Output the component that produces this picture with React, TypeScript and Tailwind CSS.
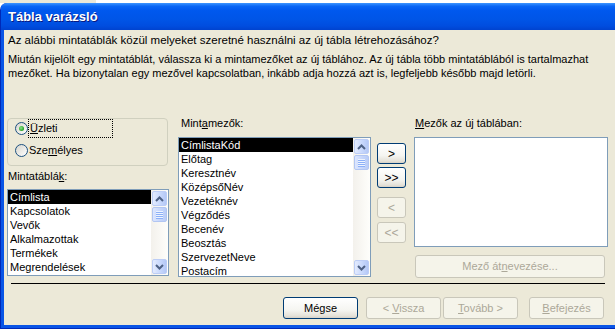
import clsx from 'clsx';
import type { ReactNode } from 'react';

const templates = ['Címlista', 'Kapcsolatok', 'Vevők', 'Alkalmazottak', 'Termékek', 'Megrendelések'];
const fields = [
  'CímlistaKód',
  'Előtag',
  'Keresztnév',
  'KözépsőNév',
  'Vezetéknév',
  'Végződés',
  'Becenév',
  'Beosztás',
  'SzervezetNeve',
  'Postacím',
];

function ScrollArrow({ dir }: { dir: 'up' | 'down' }) {
  return (
    <div className="h-[15px] rounded-[2px] border border-[#bccdf6] bg-[linear-gradient(90deg,#e3ebfe,#c8d8fc_55%,#b4c8f6)] flex items-center justify-center">
      <svg width="9" height="6" viewBox="0 0 9 6">
        <path
          d={dir === 'up' ? 'M1 5 L4.5 1.5 L8 5' : 'M1 1 L4.5 4.5 L8 1'}
          fill="none"
          stroke="#4d6185"
          strokeWidth="2"
        />
      </svg>
    </div>
  );
}

function ScrollBar() {
  return (
    <div className="w-[17px] flex flex-col p-[1px] bg-[linear-gradient(90deg,#f3f1ec,#fefefb)]">
      <ScrollArrow dir="up" />
      {/* thumb */}
      <div className="mt-[1px] h-[15px] rounded-[2px] border border-[#b2c6f2] bg-[linear-gradient(90deg,#dce6fe,#c6d6fb_55%,#b9ccf7)] flex flex-col items-center justify-center">
        {[0, 1, 2, 3].map((i) => (
          <div key={i} className="w-[7px] h-[2px] border-t border-[#eef4fe] border-b border-b-[#8cb0f8]" />
        ))}
      </div>
      <div className="flex-1" />
      <ScrollArrow dir="down" />
    </div>
  );
}

function ListBox({ items, className }: { items: string[]; className?: string }) {
  return (
    <div className={clsx('flex border border-[#7f9db9] bg-white overflow-hidden', className)}>
      <div className="flex-1 overflow-hidden">
        {items.map((item, i) => (
          <div
            key={item}
            className={clsx('h-[14px] leading-[14px] pl-[2px] whitespace-nowrap', i === 0 && 'bg-black text-white')}
          >
            {item}
          </div>
        ))}
      </div>
      <ScrollBar />
    </div>
  );
}

function XpButton({
  children,
  disabled,
  className,
}: {
  children: ReactNode;
  disabled?: boolean;
  className?: string;
}) {
  return (
    <div
      className={clsx(
        'rounded-[3px] border flex items-center justify-center',
        disabled
          ? 'border-[#c9c7ba] text-[#aca899] bg-[#f5f4ea]'
          : 'border-[#003c74] bg-[linear-gradient(180deg,#ffffff,#f5f5f1_60%,#e4e1d8_90%,#d6d0c5)]',
        className,
      )}
    >
      {children}
    </div>
  );
}

function Radio({ checked }: { checked?: boolean }) {
  return (
    <span className="w-[13px] h-[13px] rounded-full border border-[#1c5180] bg-[linear-gradient(135deg,#d6d5cd,#ffffff)] flex items-center justify-center shrink-0">
      {checked && <span className="w-[5px] h-[5px] rounded-full bg-[radial-gradient(circle_at_40%_40%,#8ce58c,#21a121_70%,#178317)]" />}
    </span>
  );
}

export default function App() {
  return (
    <div className="w-[615px] h-[329px] overflow-hidden bg-white flex flex-col font-['Liberation_Sans',Arial,sans-serif] text-[11px] text-black">
      {/* desktop strip above the window */}
      <div className="h-[3px] flex shrink-0">
        <div className="w-[96px] bg-[#ece9d8]" />
      </div>

      <div className="flex-1 flex flex-col rounded-tl-[7px] overflow-hidden bg-[#0029b8] pl-[1px] pb-[1px]">
        {/* Title bar */}
        <div className="h-[27px] shrink-0 flex items-center pl-[7px] bg-[linear-gradient(180deg,#3d95ff_0%,#0a66f5_12%,#0058ee_28%,#0055e7_60%,#004ddf_85%,#0043cf_100%)]">
          <span className="font-bold text-[13px] text-white [text-shadow:1px_1px_0_#0a1a80]">Tábla varázsló</span>
        </div>

        {/* Window body */}
        <div className="flex-1 flex flex-col border-l-[3px] border-b-[3px] border-[#0955e6] bg-[#ece9d8]">
          {/* Intro */}
          <div className="pl-[4px] pt-[3px] leading-[14px] whitespace-nowrap">
            <p className="text-[11.5px]">Az alábbi mintatáblák közül melyeket szeretné használni az új tábla létrehozásához?</p>
            <p className="mt-[5px]">
              Miután kijelölt egy mintatáblát, válassza ki a mintamezőket az új táblához. Az új tábla több mintatáblából is tartalmazhat
              <br />
              mezőket. Ha bizonytalan egy mezővel kapcsolatban, inkább adja hozzá azt is, legfeljebb később majd letörli.
            </p>
          </div>

          {/* Main area */}
          <div className="flex pl-[3px] mt-[36px]">
            {/* Templates column */}
            <div className="w-[162px] flex flex-col">
              <div className="mt-[2px] w-[161px] h-[48px] rounded-[4px] border border-[#d0d0bf] flex flex-col">
                <div className="flex items-center h-[19px]">
                  <span className="ml-[7px]">
                    <Radio checked />
                  </span>
                  <span className="h-[19px] w-[85px] border border-dotted border-black pl-[1px] leading-[17px]">
                    <u>Ü</u>zleti
                  </span>
                </div>
                <div className="flex items-center h-[19px] mt-[3px]">
                  <span className="ml-[7px]">
                    <Radio />
                  </span>
                  <span className="pl-[1px]">
                    Sze<u>m</u>élyes
                  </span>
                </div>
              </div>
              <div className="mt-[3px] pl-[1px] leading-[14px]">
                Mintatáblá<u>k</u>:
              </div>
              <ListBox items={templates} className="mt-[6px] h-[87px]" />
            </div>

            {/* Sample fields column */}
            <div className="ml-[9px] w-[193px] flex flex-col">
              <div className="pl-[3px] leading-[14px]">
                Mint<u>a</u>mezők:
              </div>
              <ListBox items={fields} className="mt-[7px] h-[140px]" />
            </div>

            {/* Move buttons */}
            <div className="ml-[6px] w-[29px] flex flex-col pt-[27px] text-[12px]">
              <XpButton className="h-[21px]">&gt;</XpButton>
              <XpButton className="h-[21px] mt-[3px]">&gt;&gt;</XpButton>
              <XpButton disabled className="h-[21px] mt-[9px]">
                &lt;
              </XpButton>
              <XpButton disabled className="h-[21px] mt-[4px]">
                &lt;&lt;
              </XpButton>
            </div>

            {/* New table fields */}
            <div className="ml-[8px] w-[194px] flex flex-col">
              <div className="pl-[1px] leading-[14px]">
                <u>M</u>ezők az új táblában:
              </div>
              <div className="mt-[7px] h-[110px] border border-[#7f9db9] bg-white" />
              <XpButton disabled className="mt-[8px] ml-[1px] w-[190px] h-[23px]">
                <span>
                  Mező át<u>n</u>evezése...
                </span>
              </XpButton>
            </div>
          </div>

          {/* Separator */}
          <div className="mt-[5px] ml-[7px] mr-[10px] h-px bg-black" />

          {/* Navigation buttons */}
          <div className="mt-[13px] flex justify-end pr-[11px]">
            <XpButton className="w-[75px] h-[22px]">Mégse</XpButton>
            <XpButton disabled className="ml-[8px] w-[75px] h-[22px]">
              <span>
                &lt; <u>V</u>issza
              </span>
            </XpButton>
            <XpButton disabled className="ml-[2px] w-[75px] h-[22px]">
              <span>
                <u>T</u>ovább &gt;
              </span>
            </XpButton>
            <XpButton disabled className="ml-[11px] w-[75px] h-[22px]">
              <span>
                <u>B</u>efejezés
              </span>
            </XpButton>
          </div>
        </div>
      </div>
    </div>
  );
}
